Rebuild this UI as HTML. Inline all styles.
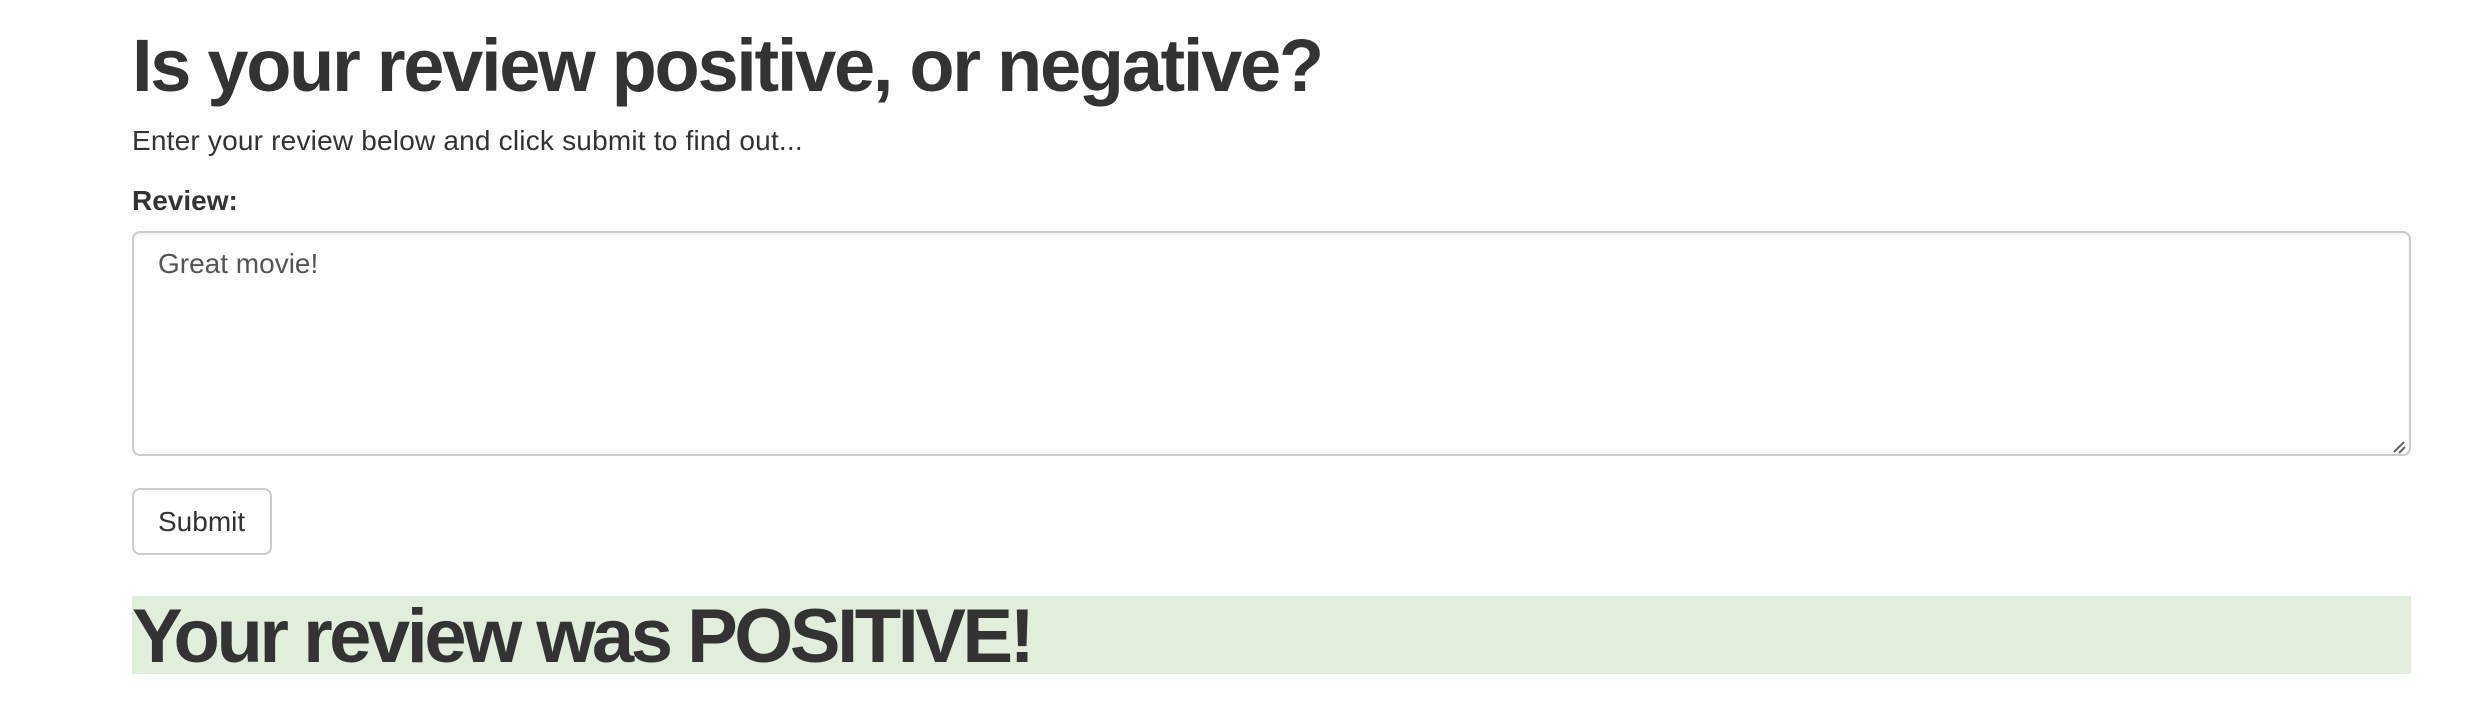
<!DOCTYPE html>
<html><head><meta charset="utf-8"><style>
html,body{margin:0;padding:0;background:#fff;width:2486px;height:728px;overflow:hidden;font-family:"Liberation Sans",Arial,sans-serif;color:#333}
.t{position:absolute;white-space:nowrap;line-height:1}
.ta{position:absolute;left:132px;top:231px;width:2275px;height:221px;border:2px solid #ccc;border-radius:8px;box-shadow:inset 0 2px 2px rgba(0,0,0,.06)}
.btn{position:absolute;left:132px;top:488px;width:136px;height:63px;border:2px solid #ccc;border-radius:8px}
.res{position:absolute;left:132px;top:596px;width:2279px;height:78px;background:#e1eedb}
</style></head><body>
<div class="t" style="left:132px;top:29px;font-size:74px;font-weight:bold;letter-spacing:-2.3px">Is your review positive, or negative?</div>
<div class="t" style="left:132px;top:127px;font-size:28px;letter-spacing:0.2px">Enter your review below and click submit to find out...</div>
<div class="t" style="left:132px;top:187px;font-size:28px;font-weight:bold">Review:</div>
<div class="ta"></div>
<div class="t" style="left:158px;top:250px;font-size:28px;color:#555">Great movie!</div>
<svg style="position:absolute;left:2392px;top:440px" width="14" height="14"><path d="M2 12L12 2M7 13L13 7" stroke="#666" stroke-width="2"/></svg>
<div class="btn"></div>
<div class="t" style="left:158px;top:508px;font-size:28px">Submit</div>
<div class="res"></div>
<div class="t" style="left:132px;top:599px;font-size:76px;font-weight:bold;letter-spacing:-3.5px">Your review was POSITIVE!</div>
</body></html>
